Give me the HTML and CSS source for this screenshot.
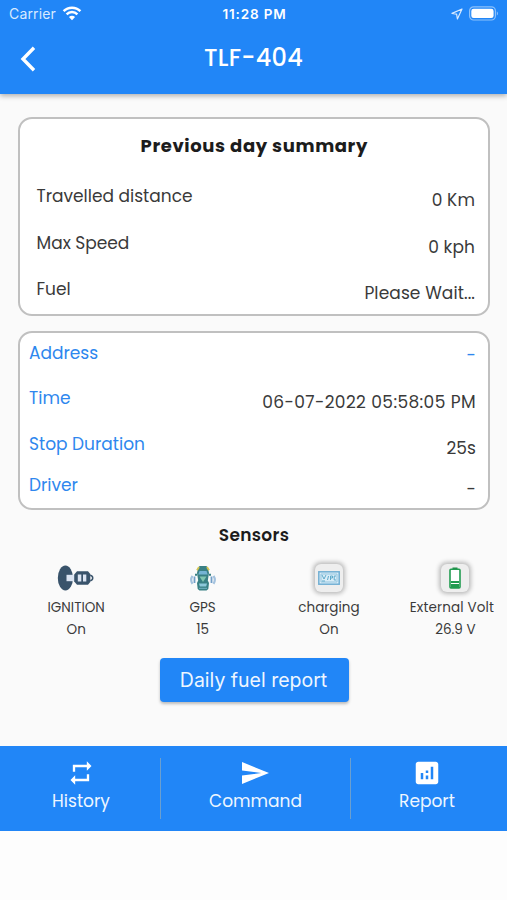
FILE: index.html
```html
<!DOCTYPE html>
<html lang="en">
<head>
<meta charset="utf-8">
<title>TLF-404</title>
<link rel="stylesheet" href="styles.css">
</head>
<body>
<header class="header">
  <div class="status">
    <div class="carrier"><span>Carrier</span>
      <svg width="20" height="15" viewBox="0 0 20 15" fill="none" stroke="#fff" stroke-width="2.5"><path d="M1.6 5.2C6.2.5 13.8.5 18.4 5.2M4.6 8.3c3-3 7.8-3 10.8 0"/><path d="M10 14.2 6.9 11c1.7-1.7 4.5-1.7 6.2 0z" fill="#fff" stroke="none"/></svg>
    </div>
    <span class="clock">11:28 PM</span>
    <div class="power">
      <svg width="12" height="12" viewBox="0 0 12 12" fill="none" stroke="#d8eaff" stroke-width="1.2" stroke-linejoin="round"><path d="M11 1 1 5.4l4.6.8.8 4.8z"/></svg>
      <svg width="30" height="15" viewBox="0 0 30 15"><rect x=".6" y=".8" width="25.8" height="13.2" rx="4" fill="none" stroke="#8cc1fb" stroke-width="1.2"/><rect x="2.3" y="2.7" width="22.3" height="9.4" rx="2.3" fill="#fff"/><path d="M27.8 5.2c1.6.8 1.6 3.6 0 4.4z" fill="#8cc1fb"/></svg>
    </div>
  </div>
  <div class="bar">
    <svg class="back" width="16" height="26" viewBox="0 0 16 26" fill="none" stroke="#fff" stroke-width="3.4"><path d="M14 1.8 3 13l11 11.2"/></svg>
    <h1 class="title">TLF-404</h1>
  </div>
</header>

<main class="content">
  <section class="card summary">
    <h2 class="card-title">Previous day summary</h2>
    <div class="row"><span class="label">Travelled distance</span><span class="value">0 Km</span></div>
    <div class="row"><span class="label">Max Speed</span><span class="value">0 kph</span></div>
    <div class="row"><span class="label">Fuel</span><span class="value">Please Wait...</span></div>
  </section>

  <section class="card details">
    <div class="row address"><span class="label">Address</span><span class="value link">-</span></div>
    <div class="row"><span class="label">Time</span><span class="value time">06-07-2022 05:58:05 PM</span></div>
    <div class="row duration"><span class="label">Stop Duration</span><span class="value">25s</span></div>
    <div class="row driver"><span class="label">Driver</span><span class="value">-</span></div>
  </section>

  <h2 class="sensors-title">Sensors</h2>
  <section class="sensors">
    <div class="sensor">
      <div class="icon"><svg width="38" height="28" viewBox="0 0 38 28"><ellipse cx="8.4" cy="14" rx="7.6" ry="12.4" fill="#39536b"/><path d="M9.5 10.8h7.8v6.4H9.5z" fill="#dce5f3"/><path d="M20 7.2h11l2.3 2.8v8L31 20.8H20l-2.8-3.3v-7z" fill="#39536b"/><path d="M20.8 10.6h3.5v6.8h-3.5zM26 10.6h3.3v6.8H26z" fill="#dce5f3"/><path d="M33.2 11.2c3.4.7 3.4 4.9 0 5.600" fill="none" stroke="#39536b" stroke-width="1.5"/></svg></div>
      <span class="name">IGNITION</span><span class="reading">On</span>
    </div>
    <div class="sensor">
      <div class="icon"><svg width="26" height="28" viewBox="0 0 26 28"><path d="M8 4.400 9.500 2h7L18 4.400l1 4.700-1.200 7.500 1.200 2.500-.7 6-1.800 1.300h-7l-1.800-1.300-.7-6 1.200-2.500L7 9.100z" fill="#398084"/><path d="M7 6.200 9 3M19 6.200 17 3" stroke="#d5c451" stroke-width="1.800"/><path d="m8.300 10.500 1.200-3.600h7l1.200 3.600z" fill="#75b4d4"/><path d="M9.500 12.500h7L13 18z" fill="#81c6b0"/><path d="M9 19.500h8l-.8 3H9.800z" fill="#8dc8da"/><path d="M9 24.300h8" stroke="#74b3c5"/><path d="M7 10.800H5M19 10.800h2" stroke="#398084" stroke-width="2"/><path d="M4.500 12.500v6.500M21.500 12.500v6.500" stroke="#729fc8" stroke-width="1.800"/><path d="M2.500 11.800Q-.2 15.800 2.500 19.800M23.500 11.800q2.700 4 0 8" fill="none" stroke="#a4c2de" stroke-width="2.200"/></svg></div>
      <span class="name">GPS</span><span class="reading">15</span>
    </div>
    <div class="sensor">
      <div class="icon"><div class="tile"><svg width="22" height="14" viewBox="0 0 22 14"><rect x=".8" y=".8" width="20.4" height="12.4" fill="#d9edf8" stroke="#72afd3" stroke-width="1.5"/><path d="M3 3h16v8H3z" fill="none" stroke="#94c5df"/><path d="m4 4 2 4 2-4M9.500 9l1-4M12.500 9V5h2v2h-2M18 5h-1.800v4H18M4 10h3" fill="none" stroke="#5faaca"/></svg></div></div>
      <span class="name">charging</span><span class="reading">On</span>
    </div>
    <div class="sensor">
      <div class="icon"><div class="tile"><svg width="12" height="22" viewBox="0 0 12 22"><path d="M3.500.5h5v2h-5z" fill="#238747"/><rect x="1" y="2.300" width="10" height="18.600" rx="1" fill="#fff" stroke="#219c50" stroke-width="1.600"/><path d="M2 14h8v2H2zM2 17h8v3H2z" fill="#219c50"/></svg></div></div>
      <span class="name volt">External Volt</span><span class="reading">26.9 V</span>
    </div>
  </section>
  <button class="report-button">Daily fuel report</button>
</main>

<nav class="tabs">
  <a class="tab"><svg width="28" height="28" viewBox="0 0 24 24" fill="#fff"><path d="M7 7h10v3l4-4-4-4v3H5v6h2V7zm10 10H7v-3l-4 4 4 4v-3h12v-6h-2v4z"/></svg><span>History</span></a>
  <a class="tab wide"><svg width="27" height="24" viewBox="2 3 21 18" preserveAspectRatio="none" fill="#fff"><path d="M2.010 21 23 12 2.010 3 2 10l15 2-15 2z"/></svg><span>Command</span></a>
  <a class="tab"><svg width="30" height="30" viewBox="0 0 24 24" fill="#fff"><path fill-rule="evenodd" d="M19 3H5c-1.100 0-2 .9-2 2v14c0 1.100.9 2 2 2h14c1.100 0 2-.9 2-2V5c0-1.100-.9-2-2-2zM9 17H7v-5h2v5zm4 0h-2v-3h2v3zm0-5h-2v-2h2v2zm4 5h-2V7h2v10z"/></svg><span>Report</span></a>
</nav>
</body>
</html>
```

FILE: styles.css
```css
* { box-sizing: border-box; }
body {
  margin: 0;
  height: 900px;
  overflow: hidden;
  background: #fdfdfd;
  color: #3a3a3a;
  font: 17px/24px Poppins, Inter, sans-serif;
}
svg { display: block; flex: none; }
h1, h2 { margin: 0; }
.header {
  position: relative;
  height: 94px;
  background: #2186f7;
  color: #fff;
  box-shadow: 0 2px 5px rgba(0, 0, 0, .3);
}
.status {
  display: grid;
  grid-template-columns: 1fr auto 1fr;
  align-items: center;
  height: 27px;
  padding: 0 8px 0 9px;
  font: 14px/24px Inter, sans-serif;
}
.carrier, .power { display: flex; align-items: center; gap: 6px; }
.carrier { color: #d8eaff; letter-spacing: .15px; }
.power { justify-content: flex-end; }
.clock { font-weight: 600; font-size: 13.5px; letter-spacing: .85px; margin-left: 1px; }
.bar {
  display: grid;
  grid-template-columns: 60px 1fr 60px;
  align-items: center;
  height: 64px;
}
.back { margin-left: 20px; }
.title { font-size: 24px; font-weight: 500; letter-spacing: .3px; text-align: center; line-height: 28px; padding-bottom: 2px; }
.content {
  display: flex;
  flex-direction: column;
  height: 652px;
  padding: 23px 17px 0 18px;
  background: #fafafa;
}
.card {
  border: 2px solid #c0c0c0;
  border-radius: 14px;
  background: #fff;
  flex: none;
}
.summary { height: 199px; padding: 15px 13px 0 16.5px; }
.card-title { color: #1c1c1c; font-size: 18px; font-weight: 700; letter-spacing: .6px; text-align: center; line-height: 24px; margin: 0 3px 15px 0; }
.row { display: flex; justify-content: space-between; height: 46.5px; padding-top: 11px; }
.value { padding-top: 4px; letter-spacing: .1px; }
.details { height: 179px; margin-top: 15px; padding: 8px 12px 0 9px; }
.details .label, .link { color: #2e87ee; }
.details .row { padding-top: 10px; }
.details .address { height: 35px; padding-top: 0; }
.details .time { letter-spacing: .4px; }
.address .value { padding-top: 2px; }
.details .duration { height: 47px; padding-top: 9.5px; }
.details .driver { padding-top: 3px; }
.sensors-title { margin-top: 13px; color: #1c1c1c; font-size: 17px; font-weight: 600; letter-spacing: .3px; line-height: 24px; text-align: center; }
.sensors {
  display: grid;
  grid-template-columns: repeat(4, 126.4px);
  margin: 13px -17px 0 -5px;
  font-size: 13.5px;
  line-height: 22px;
}
.sensor { display: flex; flex-direction: column; align-items: center; white-space: nowrap; }
.icon { display: flex; align-items: center; justify-content: center; height: 36px; margin-bottom: 1px; }
.tile {
  display: flex;
  align-items: center;
  justify-content: center;
  width: 28px;
  height: 28px;
  border-radius: 6px;
  background: #eee;
  box-shadow: 0 0 4px 2px #bbb;
}
.volt { margin-right: 7px; letter-spacing: .15px; }
.report-button {
  align-self: center;
  width: 189px;
  height: 44px;
  margin: 17px 0 0;
  padding: 0 1px 0 0;
  border: 0;
  border-radius: 4px;
  background: #2186f7;
  box-shadow: 0 2px 3px rgba(0, 0, 0, .25);
  color: #eef6ff;
  font: 19.5px/44px Inter, sans-serif;
}
.tabs {
  display: grid;
  grid-template-columns: 160px 191px 1fr;
  height: 85px;
  padding: 12px 0;
  background: #2186f7;
  color: #eef6ff;
}
.tab { display: flex; flex-direction: column; align-items: center; }
.tab:first-child { padding-left: 2px; }
.tab:last-child { padding-right: 4px; }
.tab svg { height: 30px; }
.wide svg { height: 22px; margin: 4px 0; }
.tab span { line-height: 26px; }
.wide { border: solid #6b9fcf; border-width: 0 1px; }
```
